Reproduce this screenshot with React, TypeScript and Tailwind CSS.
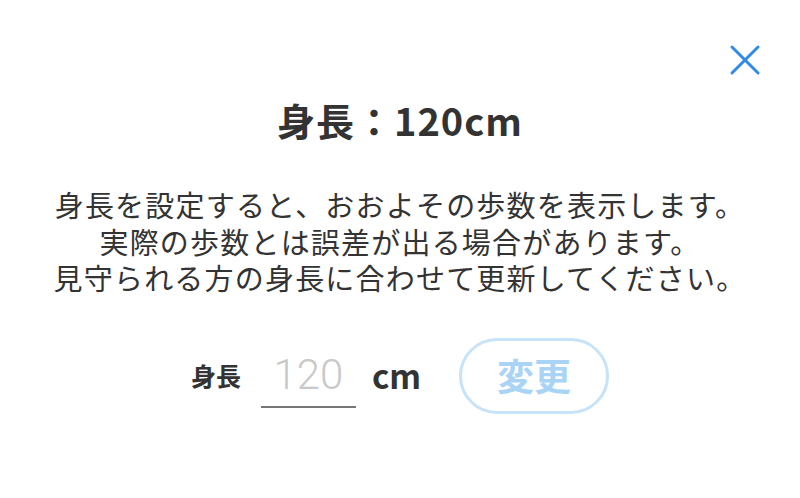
import { useState } from 'react'

const jp = "font-['Hiragino_Sans','Noto_Sans_CJK_JP',sans-serif]"

function CloseButton() {
  return (
    <button className="w-[34px] h-[34px] flex items-center justify-center text-[#2f8be6]">
      <svg width="32" height="32" viewBox="0 0 32 32" fill="none" stroke="currentColor" strokeWidth="3" strokeLinecap="round">
        <path d="M3 3L29 29M29 3L3 29" />
      </svg>
    </button>
  )
}

function App() {
  const [height, setHeight] = useState('')

  return (
    <div className={`w-[800px] h-[498px] bg-white text-[#333333] ${jp}`}>
      <div className="flex justify-end pt-[43px] pr-[38px]">
        <CloseButton />
      </div>

      <h1 className="mt-[18px] text-center text-[38px] leading-[50px] font-bold tracking-[1px]">
        身長：120cm
      </h1>

      <p className="mt-[41px] text-center text-[29px] leading-[36.5px] tracking-[1.2px]">
        身長を設定すると、おおよその歩数を表示します。
        <br />
        実際の歩数とは誤差が出る場合があります。
        <br />
        見守られる方の身長に合わせて更新してください。
      </p>

      <div className="mt-[42px] flex items-center justify-center">
        <span className="text-[25px] font-bold mr-[20px]">身長</span>
        <input
          value={height}
          onChange={(e) => setHeight(e.target.value)}
          placeholder="120"
          className="w-[95px] h-[64px] border-b-2 border-[#777777] text-center text-[42px] font-light font-['Roboto',sans-serif] outline-none placeholder:text-[#c8c8c8]"
        />
        <span className="ml-[16px] text-[33px] font-bold">cm</span>
        <button
          disabled
          className="ml-[38px] w-[150px] h-[76px] rounded-full border-[3px] border-[#c6e3f9] text-[37px] font-bold text-[#a9d4f6]"
        >
          変更
        </button>
      </div>
    </div>
  )
}

export default App
